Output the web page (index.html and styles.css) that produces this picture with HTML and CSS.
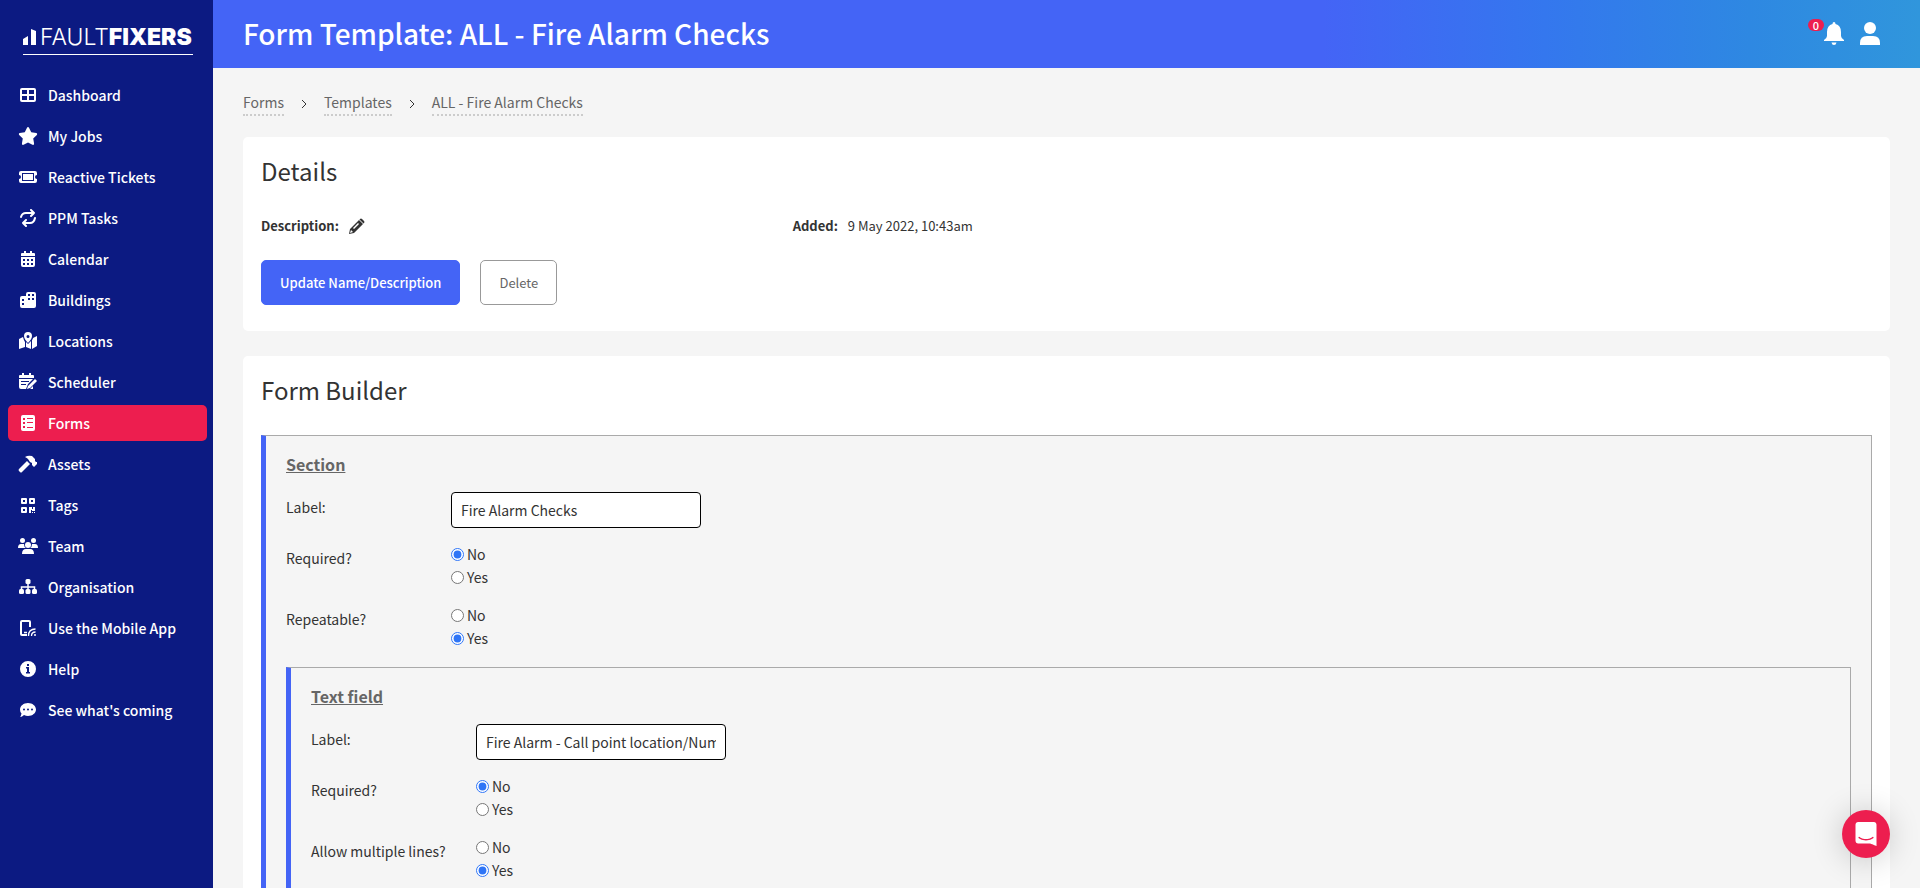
FILE: index.html
```html
<!DOCTYPE html>
<html lang="en">
<head>
    <meta charset="UTF-8">
    <meta name="viewport" content="width=device-width, initial-scale=1.0">
    <title>Form Template: ALL - Fire Alarm Checks</title>
    <link rel="stylesheet" href="styles.css">
</head>
<body>
    <aside class="sidebar">
        <a class="logo" href="#">
            <svg class="logo-bars" viewBox="0 0 13 16" aria-hidden="true"><path d="M0 10l5-3v9H0zM8 0l5 2v14H8z"/></svg>
            <span class="logo-light">FAULT</span><span class="logo-bold">FIXERS</span>
        </a>
        <nav class="menu">
            <a href="#">
                <svg viewBox="0 0 20 18"><path fill="none" stroke="currentColor" stroke-width="2" d="M4 3h12q1 0 1 1v10q0 1-1 1H4q-1 0-1-1V4q0-1 1-1zM10 3v12M3 9h14"/></svg>
                Dashboard
            </a>
            <a href="#">
                <svg viewBox="0 0 576 512"><path d="M316.900 18C311.600 7 300.400 0 288.100 0s-23.400 7-28.800 18L195 150.300 51.400 171.500c-12 1.800-22 10.200-25.700 21.700s-.7 24.200 7.900 32.700L137.800 329 113.200 474.700c-2 12 3 24.200 12.900 31.300s23 8 33.800 2.300l128.300-68.500 128.300 68.500c10.800 5.700 23.900 4.900 33.800-2.300s14.900-19.300 12.900-31.300L438.500 329 542.700 225.900c8.600-8.500 11.700-21.200 7.900-32.700s-13.700-19.900-25.700-21.700L381.200 150.300z"/></svg>
                My Jobs
            </a>
            <a href="#">
                <svg viewBox="0 0 20 18"><path fill-rule="evenodd" d="M3 3h14q2 0 2 2v2a2 2 0 0 0 0 4v2q0 2-2 2H3q-2 0-2-2v-2a2 2 0 0 0 0-4V5q0-2 2-2zm1 2v8h12V5zm1 1h10v6H5z"/></svg>
                Reactive Tickets
            </a>
            <a href="#">
                <svg viewBox="0 0 20 18"><path fill="none" stroke="currentColor" stroke-width="2" stroke-linecap="round" stroke-linejoin="round" d="M3 8q1-4 5-4h8M13 1l3 3-3 3M17 9q-1 5-5 5H5M8 11l-3 3 3 3"/></svg>
                PPM Tasks
            </a>
            <a href="#">
                <svg viewBox="0 0 20 18"><path fill-rule="evenodd" d="M6 1h2v2h4V1h2v2h2q1 0 1 1v2H3V4q0-1 1-1h2zM3 7h14v8q0 2-2 2H5q-2 0-2-2zm2 2v2h2V9zm4 0v2h2V9zm4 0v2h2V9zm-8 4v2h2v-2zm4 0v2h2v-2zm4 0v2h2v-2z"/></svg>
                Calendar
            </a>
            <a href="#">
                <svg viewBox="0 0 20 18"><path fill-rule="evenodd" d="M10 1h6q2 0 2 2v12q0 2-2 2H4q-2 0-2-2V7q0-2 2-2h4V3q0-2 2-2zm0 2v2h2V3zm4 0v2h2V3zm-4 4v2h2V7zm4 0v2h2V7zM4 8v2h2V8zm0 4v2h2v-2z"/></svg>
                Buildings
            </a>
            <a href="#">
                <svg viewBox="0 0 20 18"><path fill-rule="evenodd" d="M10 0a4 4 0 0 1 4 4q0 3-4 7-4-4-4-7a4 4 0 0 1 4-4zm0 3a1.500 1.500 0 1 0 0 3 1.500 1.500 0 0 0 0-3zM1 7l4-2q1 4 2 5v5l-6 2zM8 10l2 2 3-3v8l-5-2zM14 8q1-1 1-2l4-2v10l-5 3z"/></svg>
                Locations
            </a>
            <a href="#">
                <svg viewBox="0 0 20 18"><path fill-rule="evenodd" d="M4 0h2v2h5V0h2v2h2q1 0 1 1v2H1V3q0-1 1-1h2zM1 6h14l-5 5-2 5H3q-2 0-2-2zm2 2v1h8V8zm0 3v1h5v-1zM17 6l2 2-7 7-3 1 1-3zM12 16l3-3v3z"/></svg>
                Scheduler
            </a>
            <a class="active" href="#">
                <svg viewBox="0 0 20 18"><path fill-rule="evenodd" d="M5 1h10q2 0 2 2v12q0 2-2 2H5q-2 0-2-2V3q0-2 2-2zm0 3v2h2V4zm4 0v1h6V4zM5 8v2h2V8zm4 0v1h6V8zm-4 4v2h2v-2zm4 1v1h6v-1z"/></svg>
                Forms
            </a>
            <a href="#">
                <svg viewBox="0 0 20 18"><path d="M7 2q3-2 7-1l3 3v2l1 1 1 0v2l-3 3-2-2V8l-2-1-2-3q-1-1-3-2zM9 6l3 3-8 8q-1 1-2 0l-1-1q-1-1 0-2z"/></svg>
                Assets
            </a>
            <a href="#">
                <svg viewBox="0 0 20 18"><path fill-rule="evenodd" d="M4 2h4q1 0 1 1v4q0 1-1 1H4Q3 8 3 7V3q0-1 1-1zm1 2v2h2V4zm7-2h4q1 0 1 1v4q0 1-1 1h-4q-1 0-1-1V3q0-1 1-1zm1 2v2h2V4zM4 11h4q1 0 1 1v4q0 1-1 1H4q-1 0-1-1v-4q0-1 1-1zm1 2v2h2v-2zm6-2h3v2h1v-2h2v4h-3v-1h-1v3h-2zm3 5h1v1h-1zm2 0h1v1h-1z"/></svg>
                Tags
            </a>
            <a href="#">
                <svg viewBox="0 0 20 18"><circle cx="4.500" cy="3.500" r="2.500"/><circle cx="15.500" cy="3.500" r="2.500"/><circle cx="10" cy="8" r="3"/><path d="M0 11q0-4 3-4h3q0 3 2 4zM20 11q0-4-3-4h-3q0 3-2 4zM4 17q0-5 4-5h4q4 0 4 5z"/></svg>
                Team
            </a>
            <a href="#">
                <svg viewBox="0 0 20 18"><path fill="none" stroke="currentColor" stroke-width="1.500" d="M10 5v7M3.500 12V9h13v3"/><rect x="7.500" y="1" width="5" height="5" rx="1.500"/><rect x="1" y="11" width="5" height="5" rx="1.500"/><rect x="7.500" y="11" width="5" height="5" rx="1.500"/><rect x="14" y="11" width="5" height="5" rx="1.500"/></svg>
                Organisation
            </a>
            <a href="#">
                <svg viewBox="0 0 20 18"><path fill="none" stroke="currentColor" stroke-width="2" d="M9 16H4q-1 0-1-1V3q0-1 1-1h7q1 0 1 1v5"/><path fill="none" stroke="currentColor" stroke-width="1.300" d="M6 13.500h3M10.500 17q0-7 7-7M13.500 17q0-4 4-4"/><circle cx="17" cy="16" r="1"/></svg>
                Use the Mobile App
            </a>
            <a href="#">
                <svg viewBox="0 0 20 18"><path fill-rule="evenodd" d="M10 1a8 8 0 1 1 0 16 8 8 0 0 1 0-16zm-1 3v2h2V4zM8 7v1.500h1V12H8v1.500h4V12h-1V7z"/></svg>
                Help
            </a>
            <a href="#">
                <svg viewBox="0 0 20 18"><path fill-rule="evenodd" d="M10 2c4.400 0 8 2.900 8 6.500S14.400 15 10 15q-2 0-4-1-2 2-4 2 1-1 1.500-3.500Q2 11 2 8.500C2 4.900 5.600 2 10 2zM6 7.500a1 1 0 1 0 0 2 1 1 0 0 0 0-2zm4 0a1 1 0 1 0 0 2 1 1 0 0 0 0-2zm4 0a1 1 0 1 0 0 2 1 1 0 0 0 0-2z"/></svg>
                See what's coming
            </a>
        </nav>
    </aside>

    <div class="page">
        <header class="topbar">
            <h1>Form Template: ALL - Fire Alarm Checks</h1>
            <div class="topbar-actions">
                <button class="icon-btn" type="button" aria-label="Notifications">
                    <svg viewBox="0 0 20 24"><path d="M10 0q1.500 0 1.500 2Q17 3.500 17 10v4q0 2 3 4v1H0v-1q3-2 3-4v-4q0-6.500 5.500-8Q8.500 0 10 0zM7.500 20.500h5q-.5 2.500-2.500 2.500t-2.500-2.500z"/></svg>
                    <span class="badge">0</span>
                </button>
                <button class="icon-btn" type="button" aria-label="Account">
                    <svg viewBox="0 0 20 24"><circle cx="10" cy="6" r="6"/><path d="M0 23v-2q0-7 7-7h6q7 0 7 7v2z"/></svg>
                </button>
            </div>
        </header>

        <main class="content">
            <nav class="breadcrumb" aria-label="Breadcrumb">
                <a href="#">Forms</a>
                <svg viewBox="0 0 6 10"><path d="M1 1l4 4-4 4"/></svg>
                <a href="#">Templates</a>
                <svg viewBox="0 0 6 10"><path d="M1 1l4 4-4 4"/></svg>
                <a href="#">ALL - Fire Alarm Checks</a>
            </nav>

            <section class="card">
                <h2>Details</h2>
                <div class="details">
                    <div class="detail">
                        <strong>Description:</strong>
                        <button class="edit-btn" type="button" aria-label="Edit description">
                            <svg viewBox="0 0 16 16"><path fill-rule="evenodd" d="M10 2l4 4-9 9-5 1 1-5zM2 12l-1 3 3-1zM9 5l-5 5 1 1 5-5zM11 1q1-1 2 0l2 2q1 1 0 2l-.5.5-4-4z"/></svg>
                        </button>
                    </div>
                    <div class="detail">
                        <strong>Added:</strong>
                        <span>9 May 2022, 10:43am</span>
                    </div>
                </div>
                <div class="buttons">
                    <button class="btn btn-primary" type="button">Update Name/Description</button>
                    <button class="btn btn-outline" type="button">Delete</button>
                </div>
            </section>

            <section class="card">
                <h2>Form Builder</h2>
                <form class="block">
                    <h3>Section</h3>
                    <div class="field">
                        <label class="field-label" for="sectionLabel">Label:</label>
                        <input class="text-input" type="text" id="sectionLabel" value="Fire Alarm Checks">
                    </div>
                    <div class="field" role="radiogroup" aria-labelledby="sectionRequired">
                        <span class="field-label" id="sectionRequired">Required?</span>
                        <div class="options">
                            <label><input type="radio" name="sectionRequired" checked>No</label>
                            <label><input type="radio" name="sectionRequired">Yes</label>
                        </div>
                    </div>
                    <div class="field" role="radiogroup" aria-labelledby="sectionRepeatable">
                        <span class="field-label" id="sectionRepeatable">Repeatable?</span>
                        <div class="options">
                            <label><input type="radio" name="sectionRepeatable">No</label>
                            <label><input type="radio" name="sectionRepeatable" checked>Yes</label>
                        </div>
                    </div>

                    <div class="block">
                        <h3>Text field</h3>
                        <div class="field">
                            <label class="field-label" for="textLabel">Label:</label>
                            <input class="text-input" type="text" id="textLabel" value="Fire Alarm - Call point location/Number">
                        </div>
                        <div class="field" role="radiogroup" aria-labelledby="textRequired">
                            <span class="field-label" id="textRequired">Required?</span>
                            <div class="options">
                                <label><input type="radio" name="textRequired" checked>No</label>
                                <label><input type="radio" name="textRequired">Yes</label>
                            </div>
                        </div>
                        <div class="field" role="radiogroup" aria-labelledby="textMultiple">
                            <span class="field-label" id="textMultiple">Allow multiple lines?</span>
                            <div class="options">
                                <label><input type="radio" name="textMultiple">No</label>
                                <label><input type="radio" name="textMultiple" checked>Yes</label>
                            </div>
                        </div>
                    </div>
                </form>
            </section>
        </main>
    </div>

    <button class="chat" type="button" aria-label="Open chat">
        <svg viewBox="0 0 28 32"><path d="M28 32s-4.714-1.855-8.527-3.340H3.437C1.540 28.660 0 27.026 0 25.013V3.644C0 1.633 1.540 0 3.437 0h21.125c1.898 0 3.437 1.632 3.437 3.645v18.404H28V32zm-4.139-11.982a.88.88 0 00-1.292-.105c-.03.026-3.015 2.681-8.570 2.681-5.486 0-8.517-2.636-8.571-2.684a.88.88 0 00-1.290.107 1.010 1.010 0 00-.219.708.992.992 0 00.318.664c.142.128 3.537 3.150 9.762 3.150 6.226 0 9.621-3.022 9.763-3.150a.992.992 0 00.317-.664 1.010 1.010 0 00-.218-.707z"/></svg>
    </button>
</body>
</html>
```
FILE: styles.css
```css
* {
    margin: 0;
    padding: 0;
    box-sizing: border-box;
}

body {
    display: flex;
    height: 100vh;
    overflow: hidden;
    background-color: #f5f5f5;
    color: #333;
    font-family: "Noto Sans CJK JP", "Noto Sans", sans-serif;
    font-size: 14px;
    line-height: 23px;
}

button, input {
    font: inherit;
    color: inherit;
}

button {
    border: none;
    background: none;
    cursor: pointer;
}

svg {
    display: block;
    flex-shrink: 0;
    fill: currentColor;
}

a {
    color: inherit;
    text-decoration: none;
}

/* Sidebar */
.sidebar {
    flex: 0 0 213px;
    min-width: 0;
    padding: 24px 6px 24px 8px;
    background-color: #0c1a82;
    color: white;
}

.logo {
    display: flex;
    align-items: center;
    height: 31px;
    margin: 0 14px 22px 15px;
    padding-bottom: 4px;
    border-bottom: 1px solid white;
    font-family: Inter, sans-serif;
    font-size: 23px;
    font-weight: 300;
}

.logo-bars {
    width: 13px;
    height: 16px;
    margin-right: 4px;
}

.logo-bold {
    font-weight: 900;
}

.menu {
    display: flex;
    flex-direction: column;
    gap: 5px;
}

.menu a {
    display: flex;
    align-items: center;
    gap: 10px;
    height: 36px;
    padding: 0 10px;
    border-radius: 5px;
    font-weight: 500;
}

.menu a.active {
    background-color: #ed1e4f;
}

.menu svg {
    width: 20px;
    height: 18px;
}

/* Page */
.page {
    display: flex;
    flex: 1;
    flex-direction: column;
    min-width: 0;
}

.topbar {
    display: flex;
    flex-shrink: 0;
    align-items: center;
    justify-content: space-between;
    height: 68px;
    padding: 0 40px 0 30px;
    background: linear-gradient(90deg, #4464f6 65%, #3477ee 78%, #2e88e2 90%, #3096dc);
    color: white;
}

.topbar h1 {
    padding-bottom: 3px;
    font-size: 28px;
    font-weight: 500;
    line-height: 36px;
}

.topbar-actions {
    display: flex;
    gap: 16px;
}

.icon-btn {
    position: relative;
}

.icon-btn svg {
    width: 20px;
    height: 24px;
}

.badge {
    position: absolute;
    top: -3px;
    left: -16px;
    width: 16px;
    height: 12px;
    border-radius: 6px;
    background-color: #ed1e4f;
    font-size: 11px;
    font-weight: 500;
    line-height: 12px;
}

.content {
    flex: 1;
    padding: 23px 30px;
    overflow-y: auto;
    scrollbar-width: none;
}

.breadcrumb {
    display: flex;
    align-items: center;
    gap: 17px;
    margin-bottom: 21px;
    color: #666;
}

.breadcrumb a {
    border-bottom: 2px dotted #ccc;
    line-height: 23px;
}

.breadcrumb svg {
    width: 6px;
    height: 10px;
    fill: none;
    stroke: #333;
}

.card {
    margin-bottom: 25px;
    padding: 18px 18px 26px;
    border-radius: 5px;
    background-color: white;
}

.card h2 {
    margin-bottom: 29px;
    font-size: 24px;
    font-weight: 400;
    line-height: 32px;
}

/* Details */
.details {
    display: grid;
    grid-template-columns: 33% 33% 1fr;
    margin-bottom: 24px;
    font-size: 13px;
    line-height: 20px;
}

.detail {
    display: flex;
    align-items: center;
    gap: 10px;
}

.edit-btn svg {
    width: 16px;
    height: 16px;
}

.buttons {
    display: flex;
    gap: 20px;
}

.btn {
    height: 45px;
    padding: 0 18px;
    border: 1px solid #4464f6;
    border-radius: 5px;
    font-size: 13px;
}

.btn-primary {
    background-color: #4464f6;
    color: white;
    font-weight: 500;
}

.btn-outline {
    border-color: #999;
    color: #666;
}

/* Form builder */
.block {
    padding: 15px 20px 20px;
    border: 1px solid #aaa;
    border-left: 5px solid #4464f6;
    background-color: #f5f5f5;
}

.block h3 {
    margin-bottom: 15px;
    color: #666;
    font-size: 16px;
    font-weight: 700;
    line-height: 26px;
    text-decoration: underline;
}

.field {
    display: grid;
    grid-template-columns: 165px 1fr;
    align-items: start;
    margin-bottom: 15px;
}

.field-label {
    padding-top: 4px;
}

.text-input {
    width: 250px;
    height: 36px;
    padding: 0 9px;
    border: 1px solid #000;
    border-radius: 4px;
    background-color: white;
}

.options label {
    display: flex;
    align-items: center;
    gap: 3px;
    width: max-content;
}

.options input {
    width: 13px;
    height: 13px;
    accent-color: #2f75f6;
}

.field + .block {
    margin-top: 17px;
}

.chat {
    position: fixed;
    right: 30px;
    bottom: 30px;
    display: flex;
    align-items: center;
    justify-content: center;
    width: 48px;
    height: 48px;
    border-radius: 50%;
    background-color: #ed1e4f;
    box-shadow: 0 2px 32px rgba(0, 0, 0, 0.2);
    color: white;
}

.chat svg {
    width: 22px;
    height: 24px;
}
```
